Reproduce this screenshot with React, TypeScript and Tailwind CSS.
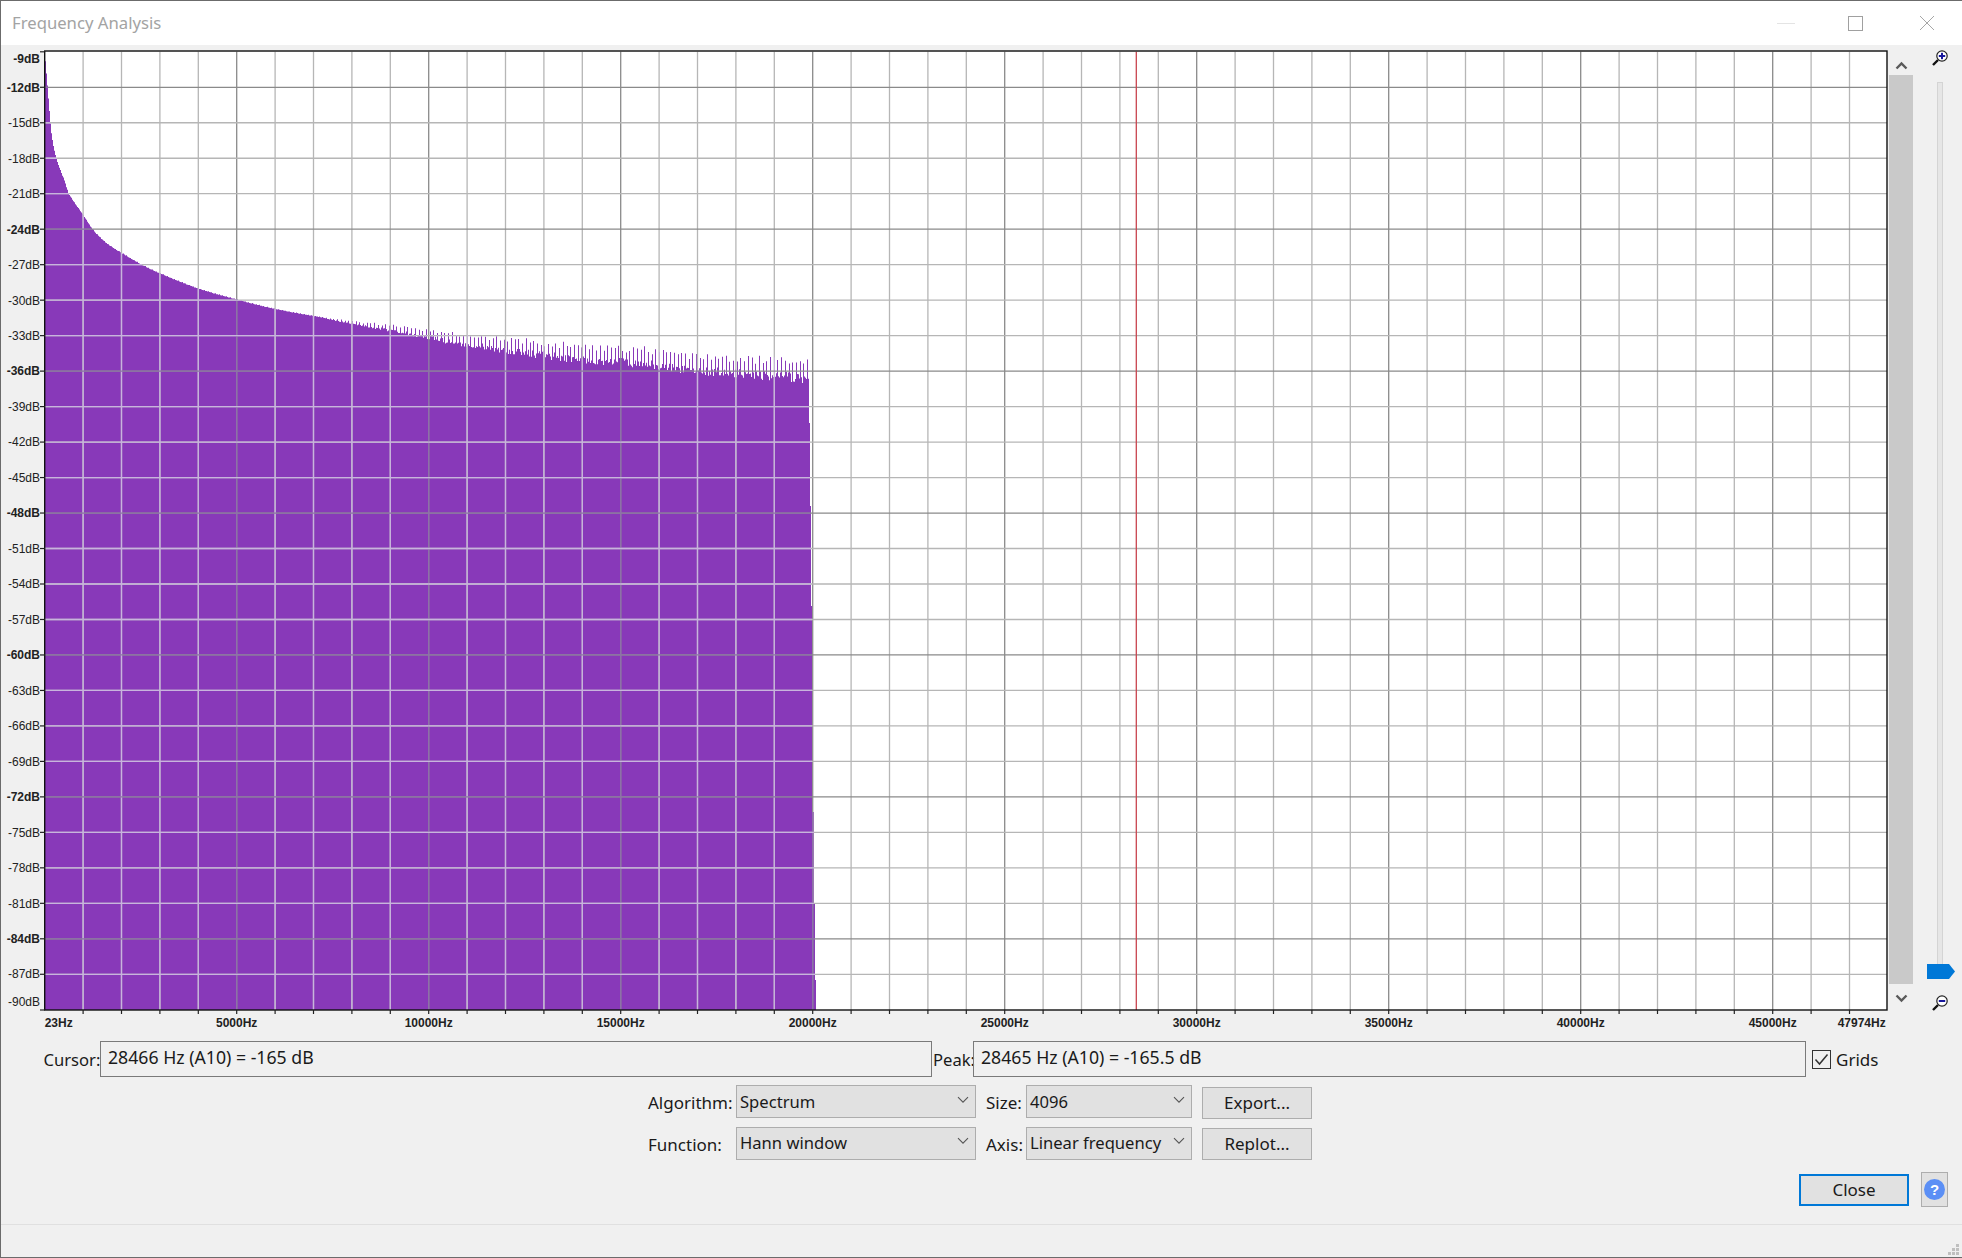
import React from "react";

// page coordinates of the plot
const LEFT = 44.7;
const RIGHT = 1887;
const TOP = 51.8;
const BOTTOM = 1010;
const STEP_X = 38.4;
const STEP_Y = 35.48;

const curvePts: [number, number][] = [
  [45, 61], [47, 85], [50, 123], [52, 140], [56, 158], [60, 170], [64, 180], [68.3, 193], [81.7, 213],
  [93.3, 230], [106.7, 243], [120, 251.7], [143, 265], [160, 273], [198, 288], [236.7, 299], [273, 308], [320, 316.5],
  [353, 320.7], [383, 323.5], [403, 325.5], [427, 328.5], [458, 332], [493, 334.5], [512, 336.5], [548, 340],
  [587, 343], [638, 345.5], [700, 352], [800, 358], [810, 359],
];

// catmull-rom through the points read off the reference, so the curve has no kinks
const curve = (x: number) => {
  for (let i = 1; i < curvePts.length; i++) {
    const [x0, y0] = curvePts[i - 1];
    const [x1, y1] = curvePts[i];
    if (x <= x1) {
      const prev = curvePts[Math.max(i - 2, 0)];
      const next = curvePts[Math.min(i + 1, curvePts.length - 1)];
      const m0 = (y1 - prev[1]) / (x1 - prev[0]);
      const m1 = (next[1] - y0) / (next[0] - x0);
      const h = x1 - x0;
      const t = (x - x0) / h;
      const t2 = t * t;
      const t3 = t2 * t;
      return (2 * t3 - 3 * t2 + 1) * y0 + (t3 - 2 * t2 + t) * h * m0 + (-2 * t3 + 3 * t2) * y1 + (t3 - t2) * h * m1;
    }
  }
  return 359;
};

const noise = (n: number) => {
  const v = Math.sin(n * 12.9898) * 43758.5453;
  return v - Math.floor(v);
};

const combDepth = (x: number) => {
  if (x < 320) return 0.8;
  if (x < 400) return 0.8 + ((x - 320) / 80) * 8;
  if (x < 500) return 8.8 + ((x - 400) / 100) * 9;
  if (x < 600) return 17.8 + ((x - 500) / 100) * 4;
  return 21.8 + ((x - 600) / 200) * 3;
};

const buildSpectrum = () => {
  let d = `M45 ${BOTTOM} V61`;
  for (let x = 45; x < 809; x++) {
    const amp = combDepth(x);
    const spike = Math.floor(x / 3.7) !== Math.floor((x - 1) / 3.7);
    const drop = spike ? noise(x + 7) * amp * 0.35 : amp * (0.6 + 0.4 * noise(x));
    d += ` H${x} V${(curve(x) + drop).toFixed(1)}`;
  }
  d += " H809 V423 H810 V506 H811 V606 H812 V812 H813.7 V904 H815 V980 H816 V1010 Z";
  return d;
};

const spectrumPath = buildSpectrum();

const vLines = Array.from({ length: 48 }, (_, i) => i).filter((i) => i > 0).map((i) => ({ x: LEFT + i * STEP_X, major: i % 5 === 0 }));
const hLines = Array.from({ length: 26 }, (_, i) => i + 1).map((i) => ({ y: TOP + i * STEP_Y, major: i % 4 === 1 }));

const dbLabels = Array.from({ length: 28 }, (_, i) => -9 - i * 3);
const hzLabels = ["5000Hz", "10000Hz", "15000Hz", "20000Hz", "25000Hz", "30000Hz", "35000Hz", "40000Hz", "45000Hz"];

const Plot = () => (
  <svg className="block w-[1848px] h-[971px] shrink-0" viewBox="40 45 1848 971">
    <defs>
      <clipPath id="spectrum">
        <path d={spectrumPath} />
      </clipPath>
    </defs>
    <rect x={LEFT} y={TOP} width={RIGHT - LEFT} height={BOTTOM - TOP} fill="#ffffff" />
    <path d={spectrumPath} fill="#8839b9" />
    {vLines.map((l) => (
      <line key={l.x} x1={l.x} x2={l.x} y1={TOP} y2={BOTTOM} stroke={l.major ? "#8a8a8a" : "#b6b6b6"} strokeWidth="1.3" />
    ))}
    {hLines.map((l) => (
      <line key={l.y} x1={LEFT} x2={RIGHT} y1={l.y} y2={l.y} stroke={l.major ? "#8a8a8a" : "#b6b6b6"} strokeWidth="1.3" />
    ))}
    <g clipPath="url(#spectrum)">
      {vLines.map((l) => (
        <line key={l.x} x1={l.x} x2={l.x} y1={TOP} y2={BOTTOM} stroke={l.major ? "#8e72a8" : "#c8b4dd"} strokeWidth="1.3" />
      ))}
      {hLines.map((l) => (
        <line key={l.y} x1={LEFT} x2={RIGHT} y1={l.y} y2={l.y} stroke={l.major ? "#8e72a8" : "#c8b4dd"} strokeWidth="1.3" />
      ))}
    </g>
    <line x1="1136.3" x2="1136.3" y1={TOP} y2={BOTTOM} stroke="#c9444e" strokeWidth="1.3" />
    <rect x={LEFT} y={51} width={RIGHT - LEFT} height={BOTTOM - 51} fill="none" stroke="#111111" strokeWidth="1.4" />
    {vLines.map((l) => (
      <line key={l.x} x1={l.x} x2={l.x} y1={BOTTOM} y2={BOTTOM + 4} stroke="#222222" strokeWidth="1.2" />
    ))}
    {[TOP, ...hLines.map((l) => l.y), BOTTOM].map((y) => (
      <line key={y} x1="40" x2={LEFT} y1={y} y2={y} stroke="#222222" strokeWidth="1.2" />
    ))}
  </svg>
);

const Magnifier = ({ plus }: { plus?: boolean }) => (
  <svg className="block" width="18" height="18" viewBox="0 0 18 18">
    <line x1="7" y1="11" x2="2" y2="16" stroke="#111111" strokeWidth="2.4" />
    <circle cx="11" cy="7" r="5.2" fill="#ffffff" stroke="#222222" strokeWidth="1.2" />
    <rect x="7.8" y="6" width="6.4" height="2" fill="#17179c" />
    {plus && <rect x="10" y="3.8" width="2" height="6.4" fill="#17179c" />}
  </svg>
);

const Chevron = ({ down }: { down?: boolean }) => (
  <svg className="block" width="13" height="9" viewBox="0 0 13 9">
    <polyline points={down ? "1.5,1.5 6.5,6.5 11.5,1.5" : "1.5,7.5 6.5,2.5 11.5,7.5"} fill="none" stroke="#5a5a5a" strokeWidth="2.4" />
  </svg>
);

const Select = ({ value }: { value: string }) => (
  <div className="flex items-center justify-between h-[33px] bg-[#e1e1e1] border border-[#adadad] pl-[3px] pr-[6px] text-[16.6px] leading-none text-[#1a1a1a] whitespace-nowrap">
    <span className="pt-px">{value}</span>
    <svg className="block shrink-0 mb-[4px]" width="12" height="8" viewBox="0 0 12 8">
      <polyline points="1,1.2 6,6.2 11,1.2" fill="none" stroke="#555555" strokeWidth="1.1" />
    </svg>
  </div>
);

const Button = ({ label }: { label: string }) => (
  <div className="ml-[10px] mt-[1.5px] w-[110px] h-[32px] flex items-center justify-center bg-[#e1e1e1] border border-[#adadad] text-[17px] leading-none text-[#1a1a1a]">
    <span className="pb-px">{label}</span>
  </div>
);

export default function App() {
  return (
    <div className="relative w-[1962px] h-[1258px] flex flex-col overflow-hidden bg-[#f0f0f0] border-l border-t border-b border-[#6b6b6b] font-['Noto_Sans',sans-serif] text-[#1a1a1a]">
      {/* title bar */}
      <div className="h-[44px] shrink-0 bg-white flex items-center justify-between pl-[11px]">
        <span className="text-[16.7px] leading-none pt-px text-[#a3a3a3]">Frequency Analysis</span>
        <div className="flex items-center">
          <div className="w-[18px] h-px bg-[#e4e4e4]" />
          <div className="ml-[53px] w-[15px] h-[15px] border border-[#a0a0a0]" />
          <svg className="block ml-[56px] mr-[27px]" width="16" height="16" viewBox="0 0 16 16">
            <path d="M1 1 L15 15 M15 1 L1 15" stroke="#a6a6a6" strokeWidth="1" fill="none" />
          </svg>
        </div>
      </div>

      {/* plot with axes and zoom controls */}
      <div className="flex h-[971px] shrink-0">
        <div className="w-[39px] shrink-0 flex flex-col items-end font-['Liberation_Sans',Arial,sans-serif] text-[12px] leading-[16px] text-[#222222]">
          {dbLabels.map((db, i) => {
            const bold = i === 0 || (db + 12) % 12 === 0;
            const rowCls = i === 0 ? "h-[24.5px] pt-[6px]" : i === 27 ? "h-[24px] pt-[2px]" : "h-[35.48px] flex items-center pt-[1px]";
            return (
              <div key={db} className={rowCls}>
                <span className={bold ? "font-bold" : "font-normal"}>{db}dB</span>
              </div>
            );
          })}
        </div>
        <Plot />
        <div className="ml-px w-[24px] shrink-0 flex flex-col items-center">
          <div className="h-[30px] flex items-center pt-[10px]">
            <Chevron />
          </div>
          <div className="w-full flex-1 bg-[#c9c9c9]" />
          <div className="h-[32px] flex items-start pt-[10px]">
            <Chevron down />
          </div>
        </div>
        <div className="ml-[13px] w-[28px] shrink-0 flex flex-col items-center pt-[4px]">
          <Magnifier plus />
          <div className="relative mt-[15px] w-[6px] h-[895px] bg-[#e6e6e6] border border-[#d4d4d4]">
            <svg className="absolute left-[-11px] top-[881px]" width="28" height="15" viewBox="0 0 28 15">
              <path d="M0 0 H22 L28 7.5 L22 15 H0 Z" fill="#0078d7" />
            </svg>
          </div>
          <div className="mt-[17px]">
            <Magnifier />
          </div>
        </div>
      </div>

      {/* frequency labels */}
      <div className="flex h-[14px] shrink-0 pl-[43.7px] font-['Liberation_Sans',Arial,sans-serif] font-bold text-[12px] leading-[14px] text-[#222222]">
        <div className="w-[96px]">23Hz</div>
        {hzLabels.map((hz) => (
          <div key={hz} className="w-[192px] text-center">{hz}</div>
        ))}
        <div className="w-[17px] flex justify-end whitespace-nowrap">47974Hz</div>
      </div>

      {/* cursor and peak readouts */}
      <div className="mt-[11px] flex items-center h-[36px] shrink-0 pl-[42.5px] text-[16.6px] leading-none">
        <span className="w-[56.5px] pt-[2px]">Cursor:</span>
        <div className="w-[832px] h-[36px] flex items-center border border-[#7a7a7a] pl-[7px] pb-[3px] text-[17.7px]">28466 Hz (A10) = -165 dB</div>
        <span className="w-[41px] pl-[1px] pt-[2px]">Peak:</span>
        <div className="w-[833px] h-[36px] flex items-center border border-[#7a7a7a] pl-[7px] pb-[3px] text-[17.7px]">28465 Hz (A10) = -165.5 dB</div>
        <div className="ml-[6px] w-[19px] h-[19px] border border-[#333333] flex items-center justify-center">
          <svg className="block" width="15" height="13" viewBox="0 0 15 13">
            <polyline points="1.5,6.5 5.5,11 13.5,1.5" fill="none" stroke="#333333" strokeWidth="1.5" />
          </svg>
        </div>
        <span className="ml-[5px] text-[17px]">Grids</span>
      </div>

      {/* analysis options */}
      <div className="mt-[8px] ml-[647px] w-[664px] shrink-0 grid grid-cols-[88px_240px_50px_166px_120px] gap-y-[8px] text-[17px] leading-none">
        <div className="h-[33px] flex items-center pt-[2px]">Algorithm:</div>
        <Select value="Spectrum" />
        <div className="h-[33px] flex items-center pl-[10px] pt-[2px]">Size:</div>
        <Select value="4096" />
        <Button label="Export..." />
        <div className="h-[33px] flex items-center pt-[2px]">Function:</div>
        <Select value="Hann window" />
        <div className="h-[33px] flex items-center pl-[10px] pt-[2px]">Axis:</div>
        <Select value="Linear frequency" />
        <Button label="Replot..." />
      </div>

      {/* close and help */}
      <div className="mt-[12px] h-[35px] shrink-0 flex items-center justify-end pr-[14px]">
        <div className="w-[110px] h-[32px] flex items-center justify-center bg-[#e1e1e1] border-2 border-[#0078d7] text-[17px] leading-none">Close</div>
        <div className="ml-[12px] w-[27px] h-[35px] flex items-center justify-center bg-[#e1e1e1] border border-[#adadad]">
          <div className="w-[21px] h-[21px] rounded-full bg-[#5b8ff5] flex items-center justify-center font-['Liberation_Sans',Arial,sans-serif] font-bold text-[15px] leading-none text-white">?</div>
        </div>
      </div>

      <div className="flex-1" />
      <div className="h-[33px] shrink-0 border-t border-[#e0e0e0]" />
      <svg className="absolute right-[2px] bottom-[1px]" width="12" height="12" viewBox="0 0 12 12" fill="#bfbfbf">
        <rect x="8" y="0" width="3" height="3" />
        <rect x="4" y="4" width="3" height="3" />
        <rect x="8" y="4" width="3" height="3" />
        <rect x="0" y="8" width="3" height="3" />
        <rect x="4" y="8" width="3" height="3" />
        <rect x="8" y="8" width="3" height="3" />
      </svg>
    </div>
  );
}
